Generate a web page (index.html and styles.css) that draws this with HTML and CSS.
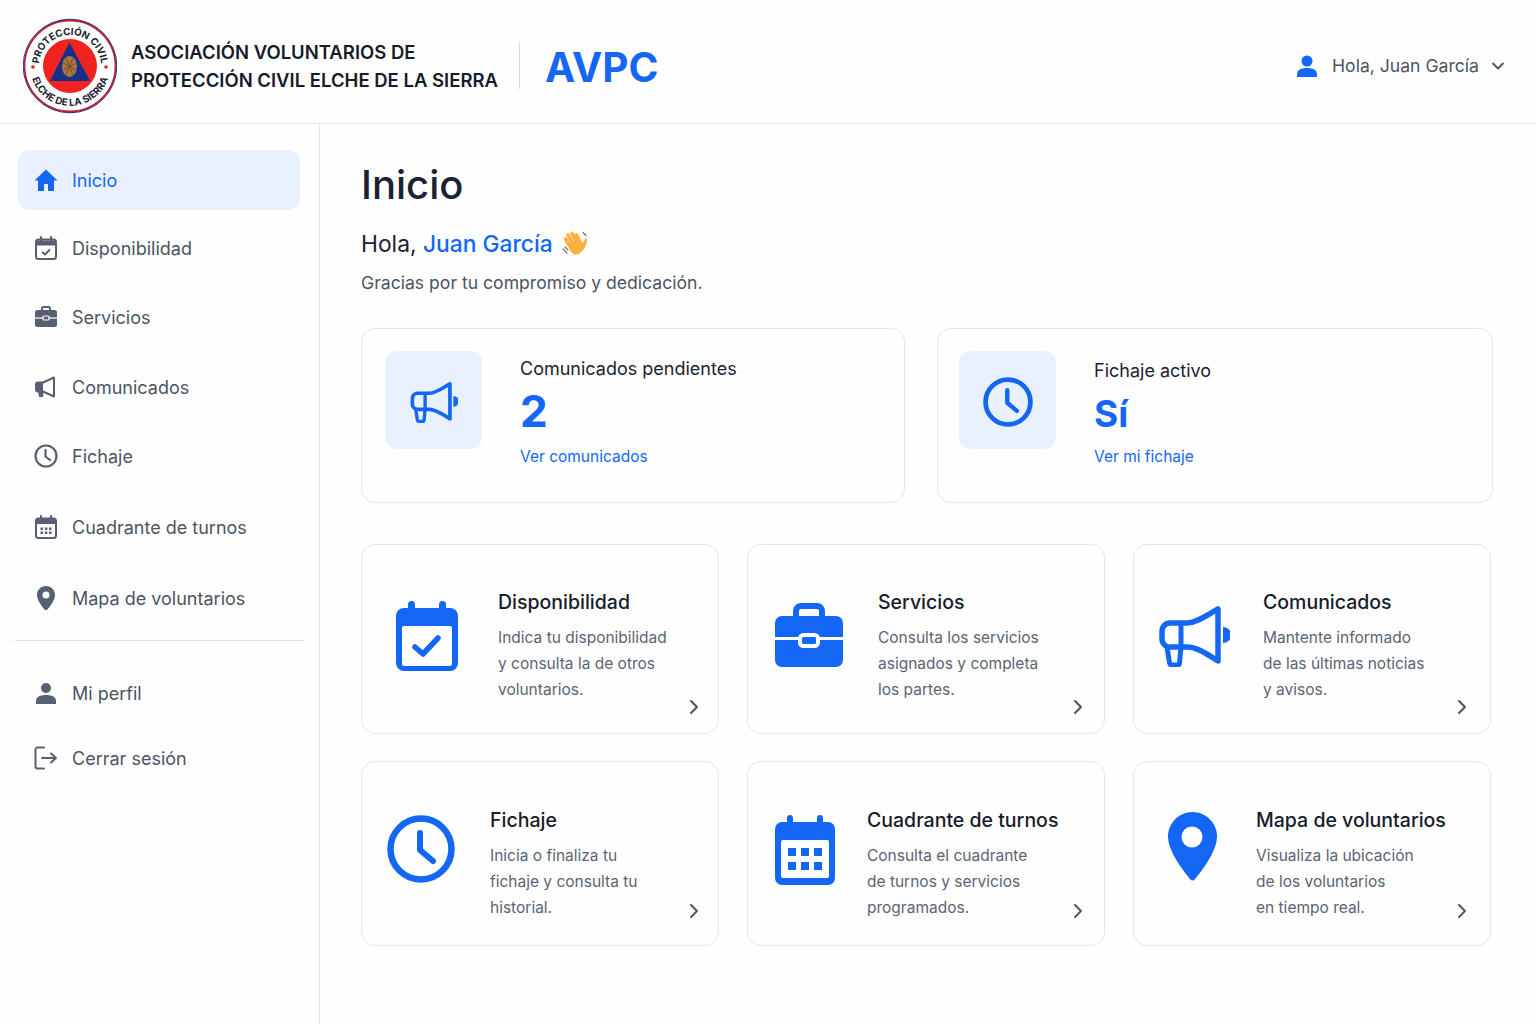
FILE: index.html
```html
<!DOCTYPE html>
<html lang="es">
<head>
    <meta charset="UTF-8">
    <meta name="viewport" content="width=device-width, initial-scale=1.0">
    <title>AVPC - Inicio</title>
    <link rel="stylesheet" href="styles.css">
</head>
<body>
    <svg class="sprites" width="0" height="0" aria-hidden="true">
        <symbol id="megaphone" viewBox="0 0 73 62">
            <path d="M5 26a8 8 0 0 1 8-8h17C40 18 50 10 61 4v52C50 49 40 42 30 42H13a8 8 0 0 1-8-8z" fill="none" stroke="currentColor" stroke-width="5.500" stroke-linejoin="round"/>
            <path d="M24 18v24M10 42l2.500 16q.5 2 3 2h4q3 0 3-2l1.500-16" fill="none" stroke="currentColor" stroke-width="5"/>
            <path d="M66 22a8 8 0 0 1 0 16z" fill="currentColor"/>
        </symbol>
        <symbol id="clock" viewBox="0 0 68 68">
            <circle cx="34" cy="34" r="30.500" fill="none" stroke="currentColor" stroke-width="6.500"/>
            <path d="M33 18v17l13 11" fill="none" stroke="currentColor" stroke-width="6" stroke-linecap="round" stroke-linejoin="round"/>
        </symbol>
    </svg>

    <header class="app-header">
        <div class="brand">
            <svg class="logo" viewBox="0 0 94 96">
                <defs>
                    <path id="logo-top" d="M17.900 58.600A31 31 0 1 1 76.100 58.600"/>
                    <path id="logo-bottom" d="M9.400 34.300A40 40 0 1 0 84.600 34.300"/>
                </defs>
                <circle cx="47" cy="48" r="45.500" fill="#fff" stroke="#c8202f" stroke-width="1.800"/>
                <circle cx="47" cy="48" r="46.800" fill="none" stroke="#1e2f86" stroke-width="1"/>
                <circle cx="47" cy="48" r="27" fill="#f0241f"/>
                <path d="M46.500 24.500 67 63H27z" fill="#15308c"/>
                <ellipse cx="46.500" cy="48.500" rx="7.500" ry="10.500" fill="#a9773f"/>
                <path d="M40 45l13 7M40 52l13-7M43 40l7 17M50 40l-7 17" stroke="#6b4420" stroke-width=".8"/>
                <circle cx="10" cy="49" r="1.800" fill="#e2242a"/>
                <circle cx="83" cy="49" r="1.800" fill="#e2242a"/>
                <text class="logo-text"><textPath href="#logo-top" startOffset="50%" text-anchor="middle">PROTECCIÓN CIVIL</textPath></text>
                <text class="logo-text"><textPath href="#logo-bottom" startOffset="50%" text-anchor="middle">ELCHE DE LA SIERRA</textPath></text>
            </svg>
            <div class="brand-name">ASOCIACIÓN VOLUNTARIOS DE<br>PROTECCIÓN CIVIL ELCHE DE LA SIERRA</div>
            <div class="brand-short">AVPC</div>
        </div>
        <div class="user-menu">
            <svg class="user-icon" viewBox="0 0 20 22"><circle cx="10" cy="6" r="5.500" fill="currentColor"/><path d="M0 22v-2.500C0 15 4 13 10 13s10 2 10 6.500V22z" fill="currentColor"/></svg>
            <span>Hola, Juan García</span>
            <svg class="user-caret" viewBox="0 0 12 8"><path d="M1 1.500l5 5 5-5" fill="none" stroke="currentColor" stroke-width="1.800" stroke-linecap="round" stroke-linejoin="round"/></svg>
        </div>
    </header>

    <div class="layout">
        <aside class="sidebar">
            <nav class="nav-main">
                <a class="nav-item active">
                    <svg viewBox="0 0 24 24"><path d="M12 1.500L.5 12.500H4V23h6v-7h4v7h6V12.500h3.500z" fill="currentColor"/></svg>
                    Inicio
                </a>
                <a class="nav-item">
                    <svg viewBox="0 0 24 24"><rect x="2" y="3.500" width="20" height="19.500" rx="2.500" fill="none" stroke="currentColor" stroke-width="2"/><path d="M2 4.500h20v5H2z" fill="currentColor"/><path d="M7 1v4M17 1v4" stroke="currentColor" stroke-width="2" stroke-linecap="round"/><path d="M8 16l3 2.500 5-5" fill="none" stroke="currentColor" stroke-width="2"/></svg>
                    Disponibilidad
                </a>
                <a class="nav-item">
                    <svg viewBox="0 0 24 24"><rect x="8" y="2" width="8" height="5" rx="1.500" fill="none" stroke="currentColor" stroke-width="2"/><rect x="1" y="5" width="22" height="17" rx="2.500" fill="currentColor"/><path d="M1 13h22" stroke="#fff" stroke-width="1.200"/><rect x="9" y="11" width="6" height="4" rx="1" fill="currentColor" stroke="#fff" stroke-width="1.200"/></svg>
                    Servicios
                </a>
                <a class="nav-item">
                    <svg viewBox="0 0 24 24"><path d="M2 9.500q0-2 2-2h5L20 2.500v19L9 16.500H4q-2 0-2-2z" fill="none" stroke="currentColor" stroke-width="2" stroke-linejoin="round"/><path d="M2 8h7v8H2z" fill="currentColor"/><path d="M4 16l1 6h4l.5-6z" fill="currentColor"/></svg>
                    Comunicados
                </a>
                <a class="nav-item">
                    <svg viewBox="0 0 24 24"><circle cx="12" cy="12" r="10.500" fill="none" stroke="currentColor" stroke-width="2.200"/><path d="M11.500 6v6.500l4.500 3.500" fill="none" stroke="currentColor" stroke-width="2.200" stroke-linecap="round"/></svg>
                    Fichaje
                </a>
                <a class="nav-item">
                    <svg viewBox="0 0 24 24"><rect x="2" y="3.500" width="20" height="19.500" rx="2.500" fill="none" stroke="currentColor" stroke-width="2"/><path d="M2 4h20v5H2z" fill="currentColor"/><path d="M7 1v4M17 1v4" stroke="currentColor" stroke-width="2" stroke-linecap="round"/><path d="M6.500 12.500h2.500v2.500H6.500zM10.800 12.500h2.500v2.500h-2.500zM15 12.500h2.500v2.500H15zM6.500 16.500h2.500V19H6.500zM10.800 16.500h2.500V19h-2.500zM15 16.500h2.500V19H15z" fill="currentColor"/></svg>
                    Cuadrante de turnos
                </a>
                <a class="nav-item">
                    <svg viewBox="0 0 24 24"><path d="M12 0C6.800 0 3 4 3 9c0 6 6 12.500 8 15q1 1 2 0c2-2.500 8-9 8-15 0-5-3.800-9-9-9z" fill="currentColor"/><circle cx="12" cy="9" r="3.500" fill="#fff"/></svg>
                    Mapa de voluntarios
                </a>
            </nav>
            <hr class="nav-divider">
            <nav class="nav-account">
                <a class="nav-item">
                    <svg viewBox="0 0 24 24"><circle cx="12" cy="7" r="5" fill="currentColor"/><path d="M2 23v-3c0-4 4-6 10-6s10 2 10 6v3z" fill="currentColor"/></svg>
                    Mi perfil
                </a>
                <a class="nav-item">
                    <svg viewBox="0 0 24 24"><path d="M10 1.500H3.500a2 2 0 0 0-2 2v17a2 2 0 0 0 2 2H10" fill="none" stroke="currentColor" stroke-width="2" stroke-linecap="round"/><path d="M8 12h14M17 7.500l5 4.500-5 4.500" fill="none" stroke="currentColor" stroke-width="2" stroke-linecap="round" stroke-linejoin="round"/></svg>
                    Cerrar sesión
                </a>
            </nav>
        </aside>

        <main class="content">
            <h1>Inicio</h1>
            <p class="greeting">Hola, <span class="greeting-name">Juan García</span>
                <svg class="wave" viewBox="0 0 28 28">
                    <g fill="none" stroke="#fbb13c" stroke-linecap="round">
                        <path d="M7 15L3.500 9M10 12.500L6 5M13.500 10.500L10 3.500M17 10.500L14.500 5" stroke-width="3.600"/>
                    </g>
                    <path d="M6 14L17 9l4 4 3-5.500c1.500 2 1 5-.5 8.500-2 5-6 9-10 8.500C9 24 7 19 6 14z" fill="#fbb13c"/>
                    <path d="M21 2.500l3 3M1 19l4 4M3 17l3 3" stroke="#6b7280" stroke-width="1.200" stroke-linecap="round"/>
                </svg>
            </p>
            <p class="thanks">Gracias por tu compromiso y dedicación.</p>

            <section class="stats">
                <article class="stat-card">
                    <div class="stat-tile"><svg class="stat-mega"><use href="#megaphone"/></svg></div>
                    <div class="stat-body">
                        <div class="stat-label">Comunicados pendientes</div>
                        <div class="stat-value">2</div>
                        <a class="stat-link">Ver comunicados</a>
                    </div>
                </article>
                <article class="stat-card stat-fichaje">
                    <div class="stat-tile"><svg class="stat-clock"><use href="#clock"/></svg></div>
                    <div class="stat-body">
                        <div class="stat-label">Fichaje activo</div>
                        <div class="stat-value">Sí</div>
                        <a class="stat-link">Ver mi fichaje</a>
                    </div>
                </article>
            </section>

            <section class="cards">
                <article class="card">
                    <svg class="card-icon icon-disp" viewBox="0 0 62 70">
                        <rect y="7" width="62" height="63" rx="8" fill="currentColor"/>
                        <rect x="12" width="7" height="14" rx="3.500" fill="currentColor"/>
                        <rect x="43" width="7" height="14" rx="3.500" fill="currentColor"/>
                        <rect x="6" y="25" width="50" height="40" rx="2" fill="#fff"/>
                        <path d="M19 46l8 7 15-16" fill="none" stroke="currentColor" stroke-width="5.500" stroke-linecap="round" stroke-linejoin="round"/>
                    </svg>
                    <div class="card-body">
                        <h3>Disponibilidad</h3>
                        <p>Indica tu disponibilidad<br>y consulta la de otros<br>voluntarios.</p>
                    </div>
                    <svg class="chevron" viewBox="0 0 10 16"><path d="M2 2l6 6-6 6" fill="none" stroke="currentColor" stroke-width="2" stroke-linecap="round" stroke-linejoin="round"/></svg>
                </article>
                <article class="card">
                    <svg class="card-icon icon-serv" viewBox="0 0 68 64">
                        <rect x="21" y="3" width="26" height="16" rx="5" fill="none" stroke="currentColor" stroke-width="6"/>
                        <rect y="13" width="68" height="51" rx="7" fill="currentColor"/>
                        <path d="M0 35.500h68" stroke="#fff" stroke-width="3"/>
                        <rect x="25" y="32" width="18" height="11" rx="3.500" fill="currentColor" stroke="#fff" stroke-width="4"/>
                    </svg>
                    <div class="card-body">
                        <h3>Servicios</h3>
                        <p>Consulta los servicios<br>asignados y completa<br>los partes.</p>
                    </div>
                    <svg class="chevron" viewBox="0 0 10 16"><path d="M2 2l6 6-6 6" fill="none" stroke="currentColor" stroke-width="2" stroke-linecap="round" stroke-linejoin="round"/></svg>
                </article>
                <article class="card">
                    <svg class="card-icon icon-com"><use href="#megaphone"/></svg>
                    <div class="card-body">
                        <h3>Comunicados</h3>
                        <p>Mantente informado<br>de las últimas noticias<br>y avisos.</p>
                    </div>
                    <svg class="chevron" viewBox="0 0 10 16"><path d="M2 2l6 6-6 6" fill="none" stroke="currentColor" stroke-width="2" stroke-linecap="round" stroke-linejoin="round"/></svg>
                </article>
                <article class="card">
                    <svg class="card-icon icon-fich"><use href="#clock"/></svg>
                    <div class="card-body">
                        <h3>Fichaje</h3>
                        <p>Inicia o finaliza tu<br>fichaje y consulta tu<br>historial.</p>
                    </div>
                    <svg class="chevron" viewBox="0 0 10 16"><path d="M2 2l6 6-6 6" fill="none" stroke="currentColor" stroke-width="2" stroke-linecap="round" stroke-linejoin="round"/></svg>
                </article>
                <article class="card">
                    <svg class="card-icon icon-cuad" viewBox="0 0 60 70">
                        <rect y="7" width="60" height="63" rx="7" fill="currentColor"/>
                        <rect x="12" width="6" height="14" rx="3" fill="currentColor"/>
                        <rect x="42" width="6" height="14" rx="3" fill="currentColor"/>
                        <rect x="6" y="25" width="48" height="38" rx="2" fill="#fff"/>
                        <path d="M13 33h8v8h-8zM26 33h8v8h-8zM39 33h8v8h-8zM13 47h8v8h-8zM26 47h8v8h-8zM39 47h8v8h-8z" fill="currentColor"/>
                    </svg>
                    <div class="card-body">
                        <h3>Cuadrante de turnos</h3>
                        <p>Consulta el cuadrante<br>de turnos y servicios<br>programados.</p>
                    </div>
                    <svg class="chevron" viewBox="0 0 10 16"><path d="M2 2l6 6-6 6" fill="none" stroke="currentColor" stroke-width="2" stroke-linecap="round" stroke-linejoin="round"/></svg>
                </article>
                <article class="card">
                    <svg class="card-icon icon-mapa" viewBox="0 0 49 69">
                        <path d="M24.500 0C11 0 0 11 0 24.500 0 40 17 61 22 67q2.500 3 5 0c5-6 22-27 22-42.500C49 11 38 0 24.500 0z" fill="currentColor"/>
                        <circle cx="24" cy="25" r="10.500" fill="#fff"/>
                    </svg>
                    <div class="card-body">
                        <h3>Mapa de voluntarios</h3>
                        <p>Visualiza la ubicación<br>de los voluntarios<br>en tiempo real.</p>
                    </div>
                    <svg class="chevron" viewBox="0 0 10 16"><path d="M2 2l6 6-6 6" fill="none" stroke="currentColor" stroke-width="2" stroke-linecap="round" stroke-linejoin="round"/></svg>
                </article>
            </section>
        </main>
    </div>
</body>
</html>
```

FILE: styles.css
```css
body {
    margin: 0;
    height: 1024px;
    overflow: hidden;
    background: #fefefe;
    color: #1b2233;
    font-family: Inter, "Liberation Sans", sans-serif;
}
a {
    text-decoration: none;
}
.sprites {
    position: absolute;
}

/* header */
.app-header {
    height: 123px;
    box-sizing: content-box;
    border-bottom: 1px solid #dfe3ea;
    display: flex;
    align-items: center;
    justify-content: space-between;
    padding: 0 32px 0 23px;
}
.brand {
    display: flex;
    align-items: center;
    padding-top: 8px;
}
.logo {
    width: 94px;
    height: 96px;
}
.logo-text {
    font-size: 9.800px;
    font-weight: 700;
    fill: #1b2233;
}
.brand-name {
    margin-left: 14px;
    font-size: 18.500px;
    font-weight: 600;
    line-height: 28px;
    color: #161c2a;
}
.brand-short {
    margin-left: 21px;
    padding-left: 25px;
    border-left: 1px solid #d5d9e0;
    height: 47px;
    line-height: 51px;
    font-size: 40.500px;
    font-weight: 700;
    color: #1467f5;
}
.user-menu {
    display: flex;
    align-items: center;
    padding-top: 8px;
    font-size: 17.600px;
    color: #4b5563;
}
.user-icon {
    width: 20px;
    height: 22px;
    color: #1467f5;
    margin-right: 15px;
}
.user-caret {
    width: 12px;
    height: 8px;
    margin-left: 13px;
}

/* sidebar */
.layout {
    display: flex;
    height: 900px;
}
.sidebar {
    width: 320px;
    border-right: 1px solid #e3e6ec;
    padding: 26px 15px 0;
    flex-shrink: 0;
    box-sizing: border-box;
}
.nav-main {
    display: grid;
    grid-template-rows: 60px 76px 62px 78px 60px 82px 60px;
    margin: 0 4px 0 3px;
}
.nav-account {
    display: grid;
    grid-template-rows: 66px 64px;
    margin: 19px 4px 0 3px;
}
.nav-item {
    display: flex;
    align-items: center;
    gap: 14px;
    padding-left: 16px;
    border-radius: 12px;
    font-size: 18px;
    color: #4b5563;
}
.nav-item svg {
    width: 24px;
    height: 24px;
    flex-shrink: 0;
    color: #566072;
}
.nav-item.active {
    background: #e9f1fe;
    color: #1467f5;
}
.nav-item.active svg {
    color: #1467f5;
}
.nav-divider {
    border: 0;
    border-top: 1px solid #d9e0ea;
    margin: 12px 0 0;
}

/* main */
.content {
    flex: 1;
    padding: 36px 0 0 41px;
}
h1 {
    margin: 0;
    font-size: 40px;
    line-height: 50px;
    font-weight: 500;
    color: #1b2233;
}
.greeting {
    display: flex;
    align-items: center;
    margin: 19px 0 0;
    font-size: 22.800px;
    line-height: 30px;
    white-space: pre;
}
.greeting-name {
    color: #1467f5;
    font-weight: 500;
}
.wave {
    width: 28px;
    height: 28px;
    margin-left: 9px;
}
.thanks {
    margin: 11px 0 0;
    font-size: 17.600px;
    line-height: 26px;
    color: #4b5563;
}

/* stat cards */
.stats {
    display: grid;
    grid-template-columns: 544px 556px;
    gap: 32px;
    margin-top: 32px;
}
.stat-card {
    height: 175px;
    box-sizing: border-box;
    border: 1.500px solid #e3e6ec;
    border-radius: 14px;
    padding: 22px 23px;
    display: flex;
    gap: 38px;
}
.stat-tile {
    width: 97px;
    height: 98px;
    box-sizing: border-box;
    padding-top: 3px;
    border-radius: 12px;
    background: #e9f1fe;
    color: #1467f5;
    display: flex;
    align-items: center;
    justify-content: center;
    flex-shrink: 0;
}
.stat-mega {
    width: 49px;
    height: 42px;
}
.stat-clock {
    width: 50px;
    height: 50px;
}
.stat-label {
    font-size: 18px;
    line-height: 24px;
    margin-top: 6px;
}
.stat-value {
    margin-top: 3px;
    font-size: 44px;
    line-height: 54px;
    font-weight: 700;
    color: #1467f5;
}
.stat-link {
    display: block;
    margin-top: 8px;
    font-size: 15.500px;
    line-height: 22px;
    color: #1467f5;
}
.stat-fichaje {
    padding-left: 21px;
}
.stat-fichaje .stat-label {
    margin-top: 8px;
}
.stat-fichaje .stat-value {
    margin: 4px 0 -3px;
    font-size: 37px;
}

/* feature cards */
.cards {
    display: grid;
    grid-template-columns: repeat(3, 358px);
    grid-template-rows: 190px 185px;
    column-gap: 28px;
    row-gap: 27px;
    margin-top: 41px;
}
.card {
    position: relative;
    box-sizing: border-box;
    border: 1.500px solid #e3e6ec;
    border-radius: 14px;
    display: flex;
    align-items: flex-start;
}
.card-icon {
    flex-shrink: 0;
    color: #1467f5;
}
.icon-disp {
    width: 62px;
    height: 70px;
    margin: 56px 40px 0 34px;
}
.icon-serv {
    width: 68px;
    height: 64px;
    margin: 58px 35px 0 27px;
}
.icon-com {
    width: 73px;
    height: 62px;
    margin: 60px 33px 0 23px;
}
.icon-fich {
    width: 68px;
    height: 68px;
    margin: 53px 35px 0 25px;
}
.icon-cuad {
    width: 60px;
    height: 70px;
    margin: 53px 32px 0 27px;
}
.icon-mapa {
    width: 49px;
    height: 69px;
    margin: 50px 39px 0 34px;
}
.card-body {
    padding-top: 44px;
}
.card:nth-child(n+4) .card-body {
    padding-top: 45px;
}
.card-body h3 {
    margin: 0 0 10px;
    font-size: 19.500px;
    line-height: 26px;
    font-weight: 500;
    color: #161c2a;
}
.card-body p {
    margin: 0;
    font-size: 15.500px;
    line-height: 26px;
    color: #5b6474;
}
.chevron {
    position: absolute;
    right: 19px;
    bottom: 18px;
    width: 10px;
    height: 16px;
    color: #4b5563;
}
.card:nth-child(3n+2) .chevron {
    right: 21px;
}
.card:nth-child(3n) .chevron {
    right: 23px;
}
.card:nth-child(n+4) .chevron {
    bottom: 26px;
}
```
